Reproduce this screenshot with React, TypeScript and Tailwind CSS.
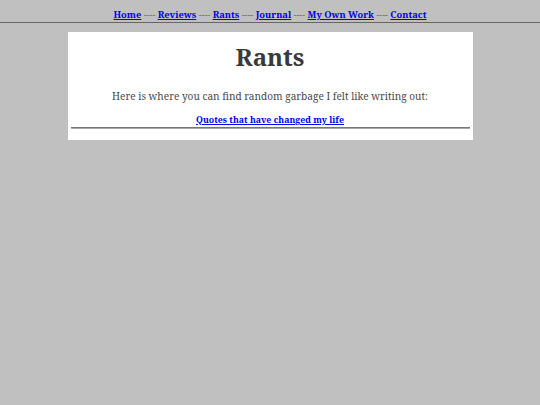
const NAV = ["Home", "Reviews", "Rants", "Journal", "My Own Work", "Contact"];

export default function App() {
  return (
    <div
      className="min-h-[405px] bg-[#c0c0c0]"
      style={{ fontFamily: '"Noto Serif", "DejaVu Serif", serif' }}
    >
      {/* Nav */}
      <nav className="border-b border-[#666] pt-[9px] pb-[1px] text-center text-[9.3px] leading-[12px] font-bold">
        {NAV.map((item, i) => (
          <span key={item}>
            {i > 0 && <span className="font-normal text-[#666]"> ---- </span>}
            <a href="#" className="text-[#0000ee] underline">
              {item}
            </a>
          </span>
        ))}
      </nav>

      {/* Content box */}
      <main className="mx-auto mt-[9px] w-[405px] bg-white px-[3px] pt-[11px] pb-[11px] text-center">
        <h1 className="text-[24px] leading-[28px] font-bold text-[#3a3a3a]">Rants</h1>
        <p className="mt-[18px] text-[10.1px] leading-[14px] text-[#4a4a4a]">
          Here is where you can find random garbage I felt like writing out:
        </p>
        <div className="mt-[11px] text-[8.8px] leading-[12px] font-bold">
          <a href="#" className="text-[#0000ee] underline">
            Quotes that have changed my life
          </a>
        </div>
        <hr className="mt-[1px] border-t border-b border-t-[#777] border-b-[#aaa]" />
      </main>
    </div>
  );
}
